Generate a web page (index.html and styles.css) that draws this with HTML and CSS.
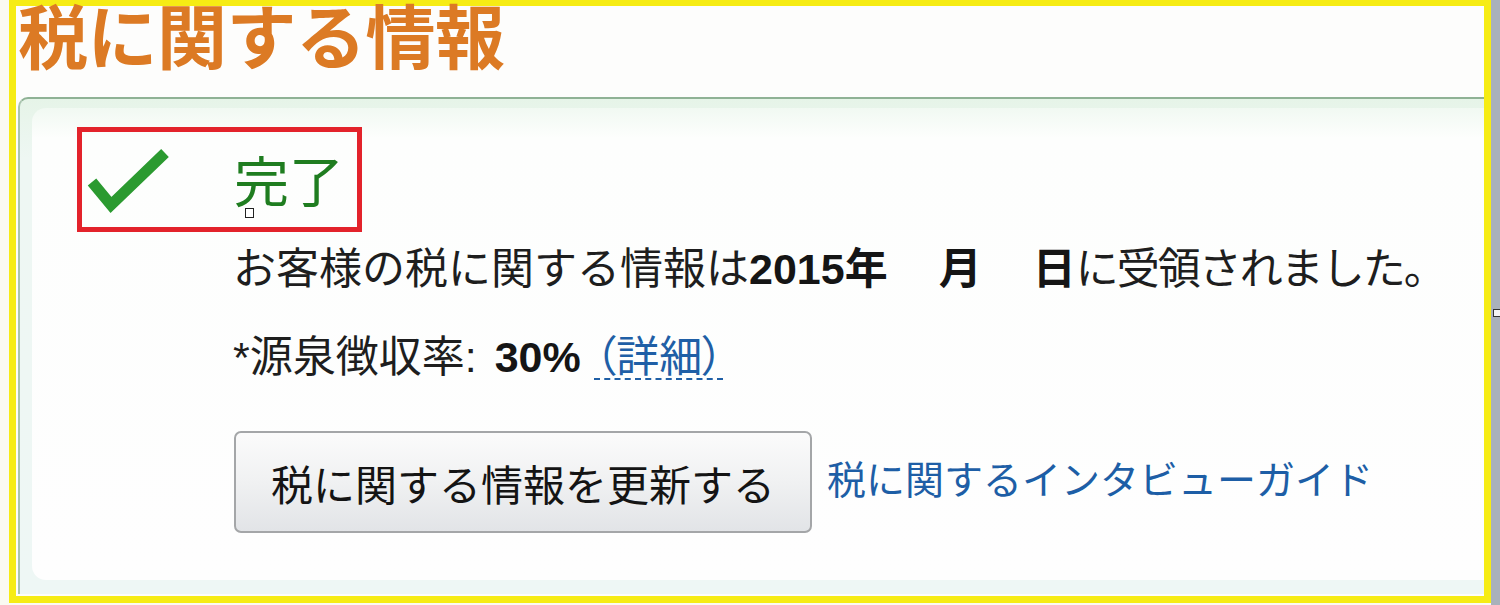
FILE: index.html
```html
<!DOCTYPE html>
<html lang="ja">
<head>
<meta charset="utf-8">
<title>税に関する情報</title>
<link rel="stylesheet" href="styles.css">
</head>
<body>
<div class="frame">
  <h1 class="title">税に関する情報</h1>
  <div class="panel">
    <div class="inner">
      <div class="status">
        <svg class="check" width="100" height="95" viewBox="0 0 100 95" aria-hidden="true">
          <polyline points="10,50 29,73 83,21" fill="none" stroke="#2b9a30" stroke-width="11" stroke-linejoin="miter" stroke-linecap="butt"/>
        </svg>
        <span class="done">完了</span>
        <span class="cursor"></span>
      </div>
      <div class="details">
        <p class="line">お客様の税に関する情報は<b>2015年<span class="gap">　</span>月<span class="gap">　</span>日</b><span class="tail">に受領されました。</span></p>
        <p class="line">*源泉徴収率: <b class="rate">30%</b> <a class="more">（詳細）</a></p>
        <div class="actions">
          <button class="btn" type="button">税に関する情報を更新する</button>
          <a class="guide">税に関するインタビューガイド</a>
        </div>
      </div>
    </div>
  </div>
</div>
<span class="marker"></span>
</body>
</html>
```

FILE: styles.css
```css
html, body {
  margin: 0;
  padding: 0;
}
body {
  width: 1500px;
  height: 605px;
  overflow: hidden;
  position: relative;
  background: linear-gradient(to right, #fafaf2 0, #fafaf2 1491px, #a9b1bb 1491px);
  font-family: "Liberation Sans", "Noto Sans CJK JP", sans-serif;
}
.frame {
  margin-left: 9px;
  width: 1482px;
  height: 603px;
  box-sizing: border-box;
  border: 7px solid #f6ec14;
  border-top-width: 6px;
  background: #fdfdfc;
}
.title {
  margin: 0;
  padding-left: 2px;
  font-family: "Noto Sans CJK JP", sans-serif;
  font-size: 70px;
  font-weight: 700;
  line-height: 56px;
  color: #dc7a24;
  letter-spacing: -0.5px;
}
.panel {
  margin-top: 35px;
  margin-left: 2px;
  height: 497px;
  box-sizing: border-box;
  border-top: 2px solid #8fb295;
  border-left: 2px solid #a9c4ae;
  border-radius: 10px 0 0 0;
  background: linear-gradient(to bottom, #e6f4e8 0, #eef7f3 60px, #eef7f5 100%);
  padding: 9px 0 14px 12px;
}
.inner {
  height: 100%;
  box-sizing: border-box;
  border-radius: 14px 0 0 14px;
  background: linear-gradient(to bottom, #f1f9f2 0, #fdfefd 30px, #fefefe 100%);
  padding: 19px 0 0 45px;
}
.status {
  position: relative;
  display: flex;
  align-items: flex-start;
  width: 285px;
  height: 105px;
  box-sizing: border-box;
  border: 5px solid #e3232b;
}
.check {
  flex: none;
}
.done {
  margin-left: 52px;
  padding-top: 18px;
  font-family: "Noto Sans CJK JP", sans-serif;
  font-size: 55px;
  line-height: 56px;
  color: #1f7d20;
}
.cursor {
  position: absolute;
  left: 163px;
  top: 76px;
  width: 7px;
  height: 8px;
  border: 1.5px solid #222;
  background: #fff;
}
.details {
  margin-left: 156px;
  color: #1e1e1e;
}
.line {
  margin: 0;
  font-size: 43px;
  line-height: 48px;
  white-space: nowrap;
}
.line:first-child {
  margin-top: 13px;
}
.line + .line {
  margin-top: 36px;
}
.line b {
  font-weight: 700;
  color: #151515;
}
.gap {
  margin: 0 4px;
}
.tail {
  letter-spacing: -2px;
}
.rate {
  margin-left: 6px;
}
.more {
  color: #1f5fa6;
  font-family: "Noto Sans CJK JP", sans-serif;
  font-feature-settings: "palt";
  margin-left: 2px;
  text-decoration-line: underline;
  text-decoration-style: dashed;
  text-decoration-thickness: 2px;
  text-decoration-color: #1f5fa6;
  text-underline-offset: 6px;
}
.actions {
  display: flex;
  align-items: center;
  margin-top: 50px;
}
.btn {
  width: 578px;
  height: 102px;
  box-sizing: border-box;
  border: 2px solid #a4a6a8;
  border-radius: 7px;
  background: linear-gradient(to bottom, #fbfbfb 0, #f0f1f2 50%, #e2e4e7 100%);
  font-family: "Noto Sans CJK JP", sans-serif;
  font-size: 42px;
  color: #141414;
  padding: 0;
  margin-left: 1px;
}
.guide {
  margin-left: 15px;
  font-family: "Noto Sans CJK JP", sans-serif;
  font-size: 39px;
  color: #1d5ea6;
  margin-top: -10px;
}
.marker {
  position: absolute;
  left: 1493px;
  top: 309px;
  width: 6px;
  height: 6px;
  border: 1px solid #333;
  background: #f4f4f4;
}
```
